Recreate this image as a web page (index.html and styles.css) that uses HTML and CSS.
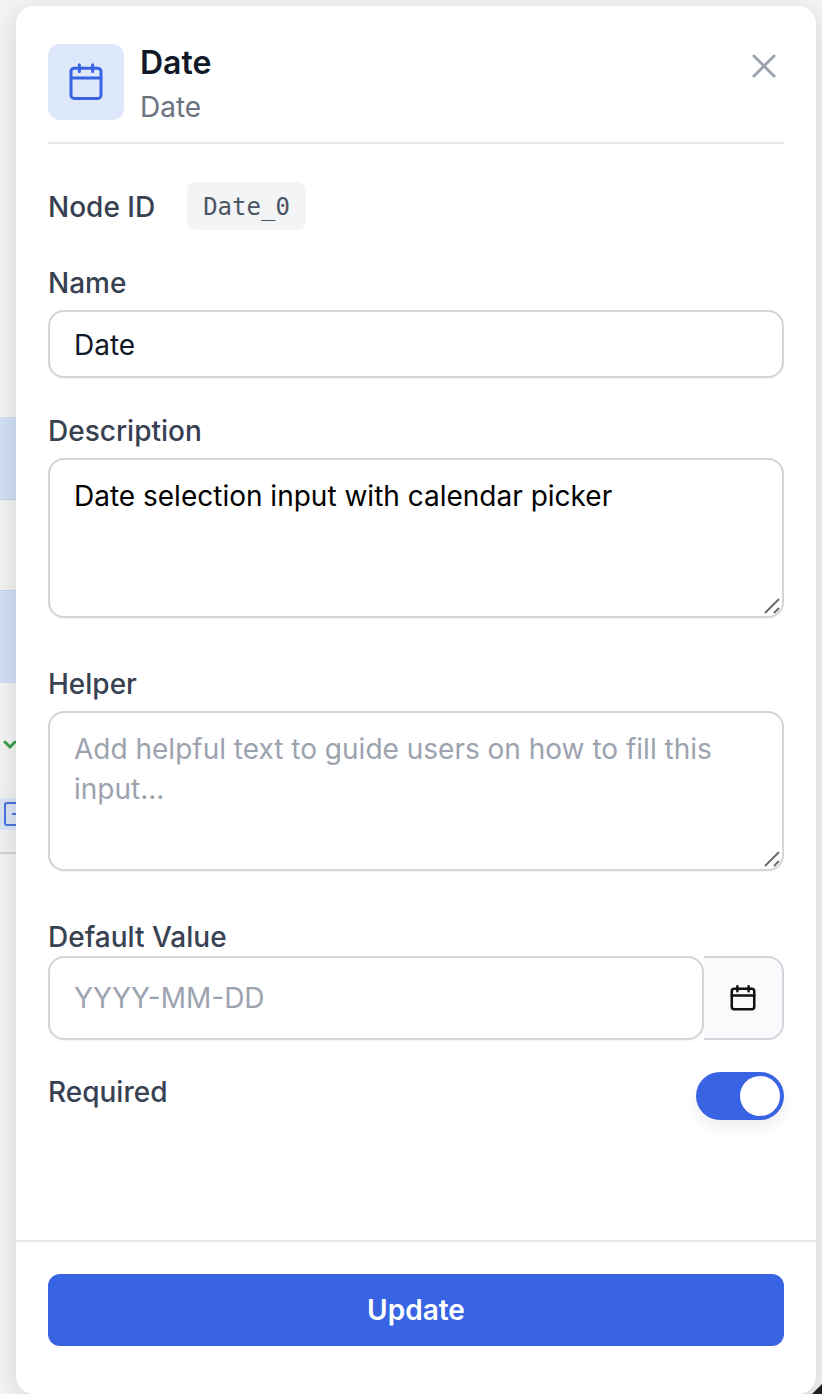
FILE: index.html
```html
<!DOCTYPE html>
<html>
<head>
    <meta charset="utf-8">
    <title>Date</title>
    <link rel="stylesheet" href="styles.css">
</head>
<body>
<div class="behind">
    <div class="strip strip1"></div>
    <div class="strip strip2"></div>
    <svg class="check" width="16" height="12" viewBox="0 0 16 12"><path d="M4 3l5 5 5-5" fill="none" stroke="#3f9d4f" stroke-width="3" stroke-linecap="round" stroke-linejoin="round"/></svg>
    <div class="bottomBand">
        <div class="iconRow"><div class="miniIcon"><div class="miniDash"></div></div></div>
    </div>
</div>
<div class="cornerDark"></div>

<div class="panel">
    <div class="content">
        <div class="header">
            <div class="iconBox">
                <svg width="40" height="40" viewBox="0 0 24 24" fill="none" stroke="#3864e4" stroke-width="1.8" stroke-linecap="round" stroke-linejoin="round">
                    <rect x="3" y="3.7" width="18" height="18.2" rx="2"/>
                    <path d="M3 9.6h18M8 1.7v4M16 1.7v4"/>
                </svg>
            </div>
            <div class="titles">
                <div class="title">Date</div>
                <div class="subtitle">Date</div>
            </div>
            <svg class="close" width="36" height="36" viewBox="0 0 36 36" fill="none" stroke="#9ca3af" stroke-width="3" stroke-linecap="round"><path d="M8 8l20 20M28 8L8 28"/></svg>
        </div>

        <div class="nodeRow">
            <span class="label nodeLabel">Node ID</span>
            <span class="chip">Date_0</span>
        </div>

        <div class="field nameField">
            <label class="label">Name</label>
            <input class="input nameInput" type="text" value="Date">
        </div>

        <div class="field descField">
            <label class="label">Description</label>
            <div class="areaWrap">
                <textarea class="input area">Date selection input with calendar picker</textarea>
                <svg class="grip" width="18" height="18" viewBox="0 0 18 18" stroke="#6b6b6b" stroke-width="2"><path d="M2 16L16 2M11 16l5-5"/></svg>
            </div>
        </div>

        <div class="field helperField">
            <label class="label">Helper</label>
            <div class="areaWrap">
                <textarea class="input area" placeholder="Add helpful text to guide users on how to fill this input..."></textarea>
                <svg class="grip" width="18" height="18" viewBox="0 0 18 18" stroke="#6b6b6b" stroke-width="2"><path d="M2 16L16 2M11 16l5-5"/></svg>
            </div>
        </div>

        <div class="field defaultField">
            <label class="label defaultLabel">Default Value</label>
            <div class="dateRow">
                <input class="input dateInput" type="text" placeholder="YYYY-MM-DD">
                <div class="dateBtn">
                    <svg width="30" height="30" viewBox="0 0 24 24" fill="none" stroke="#111" stroke-width="2" stroke-linecap="round" stroke-linejoin="round">
                        <rect x="3" y="4.5" width="18" height="16.5" rx="2"/>
                        <path d="M3 10h18M7.5 2.5v4M16.5 2.5v4"/>
                    </svg>
                </div>
            </div>
        </div>

        <div class="requiredRow">
            <span class="label requiredLabel">Required</span>
            <div class="toggle"><div class="knob"></div></div>
        </div>
    </div>

    <div class="footer">
        <button class="update">Update</button>
    </div>
</div>
</body>
</html>
```

FILE: styles.css
```css
html, body {
    margin: 0;
    padding: 0;
    height: 1394px;
    overflow: hidden;
}
body {
    position: relative;
    background-color: #f4f4f4;
    font-family: Inter, "Liberation Sans", sans-serif;
    color: #374151;
}

/* page showing behind the panel */
.behind {
    position: absolute;
    left: 0;
    top: 0;
    width: 16px;
    height: 1394px;
}
.strip {
    position: absolute;
    left: 0;
    width: 16px;
    background-color: #d3e1f5;
}
.strip1 {
    top: 417px;
    height: 82px;
    border-bottom: 1px solid #c3d5f0;
}
.strip2 {
    top: 590px;
    height: 92px;
    border-top: 1px solid #c3d5f0;
}
.check {
    position: absolute;
    left: 1px;
    top: 739px;
}
.bottomBand {
    position: absolute;
    left: 0;
    top: 787px;
    width: 16px;
    height: 67px;
    box-sizing: border-box;
    padding-top: 11px;
    background-color: #f2f2f2;
    border-bottom: 2px solid #d4d4d4;
}
.iconRow {
    height: 32px;
    padding-top: 4px;
    box-sizing: border-box;
    background-color: #dbe5f5;
}
.miniIcon {
    position: relative;
    width: 12px;
    height: 24px;
    margin-left: 4px;
    border: 2px solid #4a74e0;
    border-right: none;
    border-radius: 3px 0 0 3px;
    box-sizing: border-box;
}
.miniDash {
    position: absolute;
    left: 6px;
    top: 9px;
    width: 6px;
    height: 2px;
    background-color: #4a74e0;
}
.cornerDark {
    position: absolute;
    right: 0;
    bottom: 0;
    width: 10px;
    height: 10px;
    background-color: #222;
    clip-path: polygon(100% 0, 100% 100%, 0 100%);
}

.panel {
    position: absolute;
    left: 16px;
    top: 6px;
    width: 800px;
    height: 1388px;
    background-color: white;
    border-radius: 18px;
    box-shadow: 0 6px 28px rgba(0, 0, 0, 0.14);
    display: flex;
    flex-direction: column;
}
.content {
    flex: 1;
    padding: 38px 32px 0;
}

.header {
    display: flex;
    gap: 17px;
    height: 98px;
    border-bottom: 2px solid #e5e7eb;
}
.iconBox {
    width: 76px;
    height: 76px;
    border-radius: 12px;
    background-color: #dde8fb;
    display: flex;
    align-items: center;
    justify-content: center;
}
.titles {
    flex: 1;
    margin-left: -1px;
}
.title {
    font-size: 32px;
    line-height: 38px;
    font-weight: 600;
    color: #111827;
}
.subtitle {
    font-size: 28px;
    line-height: 32px;
    margin-top: 9px;
    color: #6b7280;
}
.close {
    margin: 4px 2px 0 0;
}

.label {
    display: block;
    font-size: 28px;
    line-height: 34px;
    font-weight: 500;
    color: #374151;
}
.nodeRow {
    display: flex;
    align-items: center;
    gap: 32px;
    margin-top: 38px;
}
.nodeLabel {
    padding-top: 2px;
}
.chip {
    height: 48px;
    line-height: 50px;
    padding: 0 16px;
    border-radius: 8px;
    background-color: #f3f4f6;
    font-family: "DejaVu Sans Mono", "Liberation Mono", monospace;
    font-size: 24px;
    color: #4b5563;
}

.input {
    display: block;
    width: 100%;
    box-sizing: border-box;
    border: 2px solid #d1d5db;
    border-radius: 16px;
    background-color: white;
    font-family: Inter, "Liberation Sans", sans-serif;
    font-size: 28px;
    color: #111827;
    outline: none;
    box-shadow: 0 1px 2px rgba(0, 0, 0, 0.05);
}
.input::placeholder {
    color: #9ca3af;
    opacity: 1;
}
.nameField {
    margin-top: 36px;
}
.nameField .label,
.descField .label,
.helperField .label {
    margin-bottom: 10px;
}
.nameInput {
    height: 68px;
    padding: 2px 24px 0;
}
.descField {
    margin-top: 36px;
}
.helperField {
    margin-top: 49px;
}
.areaWrap {
    position: relative;
}
.area {
    height: 160px;
    padding: 16px 24px;
    line-height: 40px;
    resize: none;
    color: #000;
}
.grip {
    position: absolute;
    right: 3px;
    bottom: 3px;
}

.defaultField {
    margin-top: 49px;
}
.defaultLabel {
    margin-bottom: 2px;
}
.dateRow {
    display: flex;
}
.dateInput {
    flex: 1;
    height: 84px;
    padding: 0 24px;
}
.dateBtn {
    width: 80px;
    height: 84px;
    box-sizing: border-box;
    border: 2px solid #d1d5db;
    border-left: none;
    border-radius: 0 16px 16px 0;
    background-color: #f9fafb;
    display: flex;
    align-items: center;
    justify-content: center;
}

.requiredRow {
    display: flex;
    justify-content: space-between;
    margin-top: 32px;
}
.requiredLabel {
    padding-top: 3px;
}
.toggle {
    width: 88px;
    height: 48px;
    border-radius: 24px;
    background-color: #3864e4;
    box-sizing: border-box;
    padding: 4px;
    display: flex;
    justify-content: flex-end;
    box-shadow: 0 8px 16px rgba(0, 0, 0, 0.07);
}
.knob {
    width: 40px;
    height: 40px;
    border-radius: 50%;
    background-color: white;
}

.footer {
    border-top: 2px solid #e5e7eb;
    padding: 32px 32px 48px;
}
.update {
    display: block;
    width: 100%;
    height: 72px;
    border: none;
    border-radius: 12px;
    background-color: #3864e4;
    color: white;
    font-family: Inter, "Liberation Sans", sans-serif;
    font-size: 28px;
    font-weight: 600;
}
```
